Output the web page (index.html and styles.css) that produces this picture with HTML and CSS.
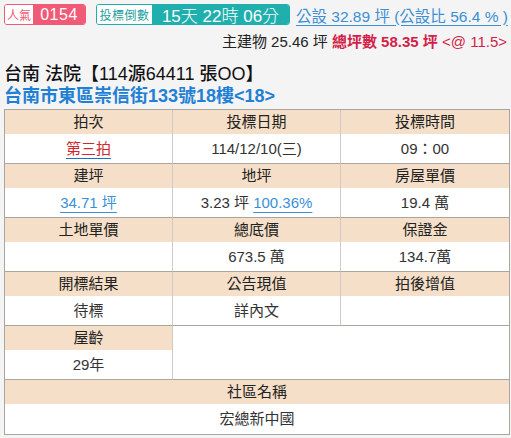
FILE: index.html
```html
<!DOCTYPE html>
<html lang="zh-Hant">
<head>
<meta charset="utf-8">
<link rel="stylesheet" href="styles.css">
</head>
<body>
<div class="page">
  <div class="top">
    <span class="badge pink"><span class="lab">人氣</span><span class="val">0154</span></span>
    <span class="badge teal"><span class="lab">投標倒數</span><span class="val">15天 22時 06分</span></span>
    <a class="pub">公設 32.89 坪 (公設比 56.4 % )</a>
  </div>
  <div class="meta">主建物 25.46 坪 <b class="red">總坪數 58.35 坪</b> <span class="red">&lt;@ 11.5&gt;</span></div>
  <div class="title">台南 法院【114源64411 張OO】</div>
  <div class="addr">台南市東區崇信街133號18樓&lt;18&gt;</div>
  <div class="grid">
    <div class="cell"><div class="h">拍次</div><div class="v"><a class="red-u">第三拍</a></div></div>
    <div class="cell"><div class="h">投標日期</div><div class="v">114/12/10(三)</div></div>
    <div class="cell last"><div class="h">投標時間</div><div class="v">09：00</div></div>
    <div class="cell"><div class="h">建坪</div><div class="v"><a class="blue-u">34.71 坪</a></div></div>
    <div class="cell"><div class="h">地坪</div><div class="v">3.23 坪 <a class="blue-u">100.36%</a></div></div>
    <div class="cell last"><div class="h">房屋單價</div><div class="v">19.4 萬</div></div>
    <div class="cell"><div class="h">土地單價</div><div class="v"></div></div>
    <div class="cell"><div class="h">總底價</div><div class="v">673.5 萬</div></div>
    <div class="cell last"><div class="h">保證金</div><div class="v">134.7萬</div></div>
    <div class="cell"><div class="h">開標結果</div><div class="v">待標</div></div>
    <div class="cell"><div class="h">公告現值</div><div class="v">詳內文</div></div>
    <div class="cell last"><div class="h">拍後增值</div><div class="v"></div></div>
    <div class="cell"><div class="h">屋齡</div><div class="v">29年</div></div>
    <div class="cell blank last"></div>
    <div class="cell full last"><div class="h">社區名稱</div><div class="v tall">宏總新中國</div></div>
  </div>
</div>
</body>
</html>
```

FILE: styles.css
```css
html, body {
  margin: 0;
  padding: 0;
  background: #f4f4f4;
}
body {
  font-family: "Liberation Sans", "Noto Sans CJK TC", sans-serif;
  color: #222;
}
.page {
  padding: 4px 3px 0 4px;
}
.top {
  display: flex;
  align-items: center;
  height: 21px;
}
.badge {
  display: inline-flex;
  align-items: stretch;
  height: 21px;
  box-sizing: border-box;
  border-radius: 3px;
  overflow: hidden;
  white-space: nowrap;
}
.badge .lab {
  background: #fff;
  font-size: 12px;
  display: flex;
  align-items: center;
  white-space: nowrap;
}
.badge .val {
  display: flex;
  align-items: center;
  color: #fff;
  white-space: nowrap;
}
.pink {
  border: 1px solid #f05a77;
  width: 82px;
}
.pink .lab { color: #f05a77; width: 28px; justify-content: center; }
.pink .val {
  background: #f05a77;
  font-size: 16px;
  flex: 1;
  justify-content: center;
  letter-spacing: 0.5px;
}
.teal {
  border: 1px solid #1fb0ae;
  margin-left: 10px;
  width: 194px;
}
.teal .lab { color: #1f9f9e; width: 55px; justify-content: center; letter-spacing: 0.5px; }
.teal .val {
  background: #1fb0ae;
  font-size: 17px;
  flex: 1;
  justify-content: center;
  font-weight: 300;
}
.pub {
  margin-left: 6px;
  color: #3b8fd5;
  font-size: 15.5px;
  text-decoration: underline;
  text-underline-offset: 3px;
  white-space: nowrap;
}
.meta {
  margin-top: 7px;
  text-align: right;
  font-size: 15px;
  line-height: 20px;
  padding-right: 1px;
}
.meta b { font-weight: bold; }
.red { color: #d21e48; }
.title {
  margin-top: 11px;
  font-size: 18px;
  line-height: 22px;
  font-weight: 500;
  color: #111;
}
.addr {
  margin-top: 0;
  font-size: 18px;
  line-height: 22px;
  font-weight: bold;
  color: #1f80d4;
}
.grid {
  margin-top: 2px;
  display: grid;
  grid-template-columns: 168px 168px 168px;
  background: #fff;
  border: 1px solid #aaa59d;
  width: 504px;
}
.cell {
  border-right: 1px solid #cfcac3;
  border-bottom: 1px solid #aaa59d;
  text-align: center;
  font-size: 15px;
}
.cell.last { border-right: none; }
.h {
  background: #f5dfc8;
  height: 24px;
  line-height: 24px;
  color: #222;
}
.v {
  height: 29px;
  line-height: 29px;
  color: #333;
}
.v.tall { height: 30px; line-height: 30px; }
.blank {
  grid-column: 2 / span 2;
  background: #fff;
}
.full {
  grid-column: 1 / span 3;
  border-bottom: none;
}
.red-u {
  color: #d0282e;
  text-decoration: underline;
  text-underline-offset: 4px;
  text-decoration-color: #1f6fc0;
}
.blue-u {
  color: #3b8fd5;
  text-decoration: underline;
  text-underline-offset: 4px;
}
```
